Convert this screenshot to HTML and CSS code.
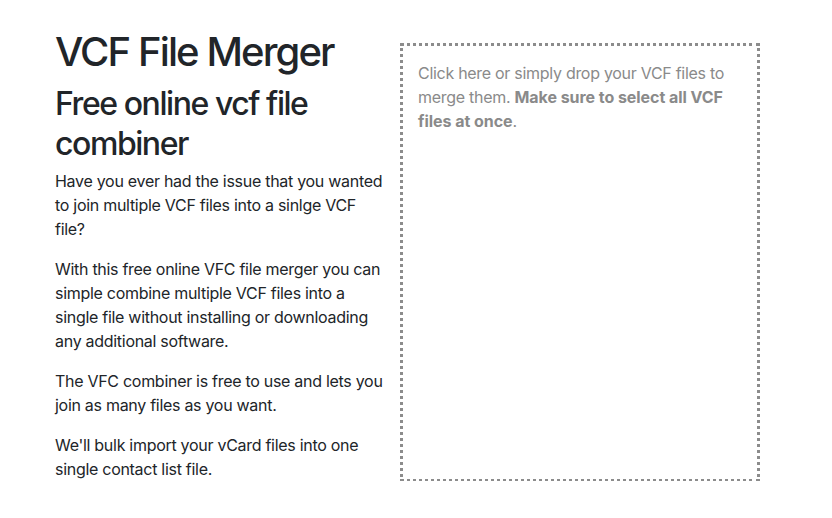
FILE: index.html
```html
<!DOCTYPE html>
<html lang="en">
<head>
<meta charset="utf-8">
<title>VCF File Merger</title>
<link rel="stylesheet" href="styles.css">
</head>
<body>
<div class="container">
  <div class="intro">
    <h1>VCF File Merger</h1>
    <h2>Free online vcf file combiner</h2>
    <p>Have you ever had the issue that you wanted to join multiple VCF files into a sinlge VCF file?</p>
    <p>With this free online VFC file merger you can simple combine multiple VCF files into a single file without installing or downloading any additional software.</p>
    <p>The VFC combiner is free to use and lets you join as many files as you want.</p>
    <p class="last">We'll bulk import your vCard files into one single contact list file.</p>
  </div>
  <div class="dropzone">
    Click here or simply drop your VCF files to merge them. <strong>Make sure to select all VCF files at once</strong>.
  </div>
</div>
</body>
</html>
```
FILE: styles.css
```css
html, body {
  margin: 0;
  padding: 0;
  background: #fff;
}
body {
  font-family: Inter, "Liberation Sans", sans-serif;
  font-size: 16px;
  line-height: 24px;
  color: #212529;
  letter-spacing: -0.018em;
}
.container {
  display: flex;
  gap: 12px;
  padding: 28px 0 0 55px;
}
.intro {
  width: 333px;
  flex: none;
}
h1 {
  font-size: 40px;
  line-height: 48px;
  font-weight: 500;
  letter-spacing: -0.047em;
  margin: 0 0 8px;
}
h2 {
  font-size: 32px;
  line-height: 40px;
  font-weight: 500;
  letter-spacing: -0.045em;
  margin: 0 0 5px;
}
p {
  margin: 0 0 16px;
}
p.last {
  margin-bottom: 0;
}
.dropzone {
  width: 360px;
  box-sizing: border-box;
  margin-top: 15px;
  margin-bottom: -1px;
  border: 3px dotted #8c8c8c;
  padding: 15px;
  color: #8a8a8a;
}
.dropzone strong {
  font-weight: 700;
  letter-spacing: -0.003em;
}
```
